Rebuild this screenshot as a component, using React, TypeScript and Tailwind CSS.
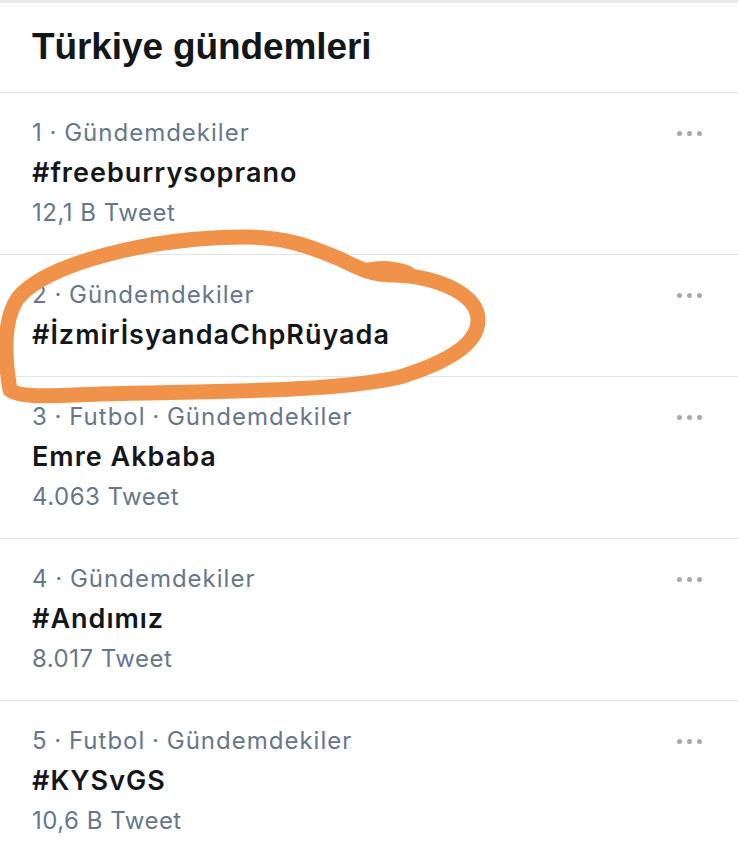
import React from "react";

type Trend = {
  meta: string;
  tag: string;
  count?: string;
};

const trends: Trend[] = [
  { meta: "1 · Gündemdekiler", tag: "#freeburrysoprano", count: "12,1 B Tweet" },
  { meta: "2 · Gündemdekiler", tag: "#İzmirİsyandaChpRüyada" },
  { meta: "3 · Futbol · Gündemdekiler", tag: "Emre Akbaba", count: "4.063 Tweet" },
  { meta: "4 · Gündemdekiler", tag: "#Andımız", count: "8.017 Tweet" },
  { meta: "5 · Futbol · Gündemdekiler", tag: "#KYSvGS", count: "10,6 B Tweet" },
];

const MoreDots = () => (
  <div className="flex h-[40px] items-center gap-[5px]">
    <span className="block h-[5px] w-[5px] rounded-full bg-[#a3aab2]" />
    <span className="block h-[5px] w-[5px] rounded-full bg-[#a3aab2]" />
    <span className="block h-[5px] w-[5px] rounded-full bg-[#a3aab2]" />
  </div>
);

const TrendRow = ({ trend }: { trend: Trend }) => (
  <div className="flex justify-between border-b border-[#e1e5e8] pl-[32px] pr-[36px] pt-[20px] pb-[21px]">
    <div className="flex flex-col">
      <p className="text-[24px] leading-[40px] tracking-[1px] text-[#66778a] [word-spacing:-1px]">
        {trend.meta}
      </p>
      <p className="text-[27px] font-semibold leading-[40px] tracking-[1px] text-[#14171a]">{trend.tag}</p>
      {trend.count && (
        <p className="text-[24px] leading-[40px] tracking-[0.5px] text-[#66778a]">{trend.count}</p>
      )}
    </div>
    <MoreDots />
  </div>
);

export default function App() {
  return (
    <div className="relative h-[843px] w-[738px] overflow-hidden bg-white font-['Inter','Liberation_Sans',sans-serif]">
      <div className="h-[3px] bg-[#e8ebee]" />
      <div className="flex h-[90px] items-center border-b border-[#e1e5e8] pl-[32px]">
        <h1 className="pb-[2px] font-['Liberation_Sans',sans-serif] text-[37px] font-bold tracking-[-0.1px] text-[#14171a]">
          Türkiye gündemleri
        </h1>
      </div>
      {trends.map((t) => (
        <TrendRow key={t.tag} trend={t} />
      ))}

      {/* hand drawn marker circle */}
      <svg
        className="pointer-events-none absolute left-0 top-0"
        width="738"
        height="843"
        viewBox="0 0 738 843"
      >
        <path
          d="M 10 390 C 4 354, 4 318, 18 298 C 45 264, 150 237, 245 237 C 290 237, 315 249, 340 259 C 360 269, 372 275, 395 275 C 440 277, 478 295, 478 320 C 478 345, 445 363, 400 377 C 330 393, 200 391, 100 394 C 50 396, 20 398, 10 390"
          fill="none"
          stroke="#f0924a"
          strokeWidth="15"
          strokeLinecap="round"
          strokeLinejoin="round"
        />
        <path
          d="M 368 270 C 382 267, 396 269, 408 273"
          fill="none"
          stroke="#f0924a"
          strokeWidth="15"
          strokeLinecap="round"
        />
      </svg>
    </div>
  );
}
